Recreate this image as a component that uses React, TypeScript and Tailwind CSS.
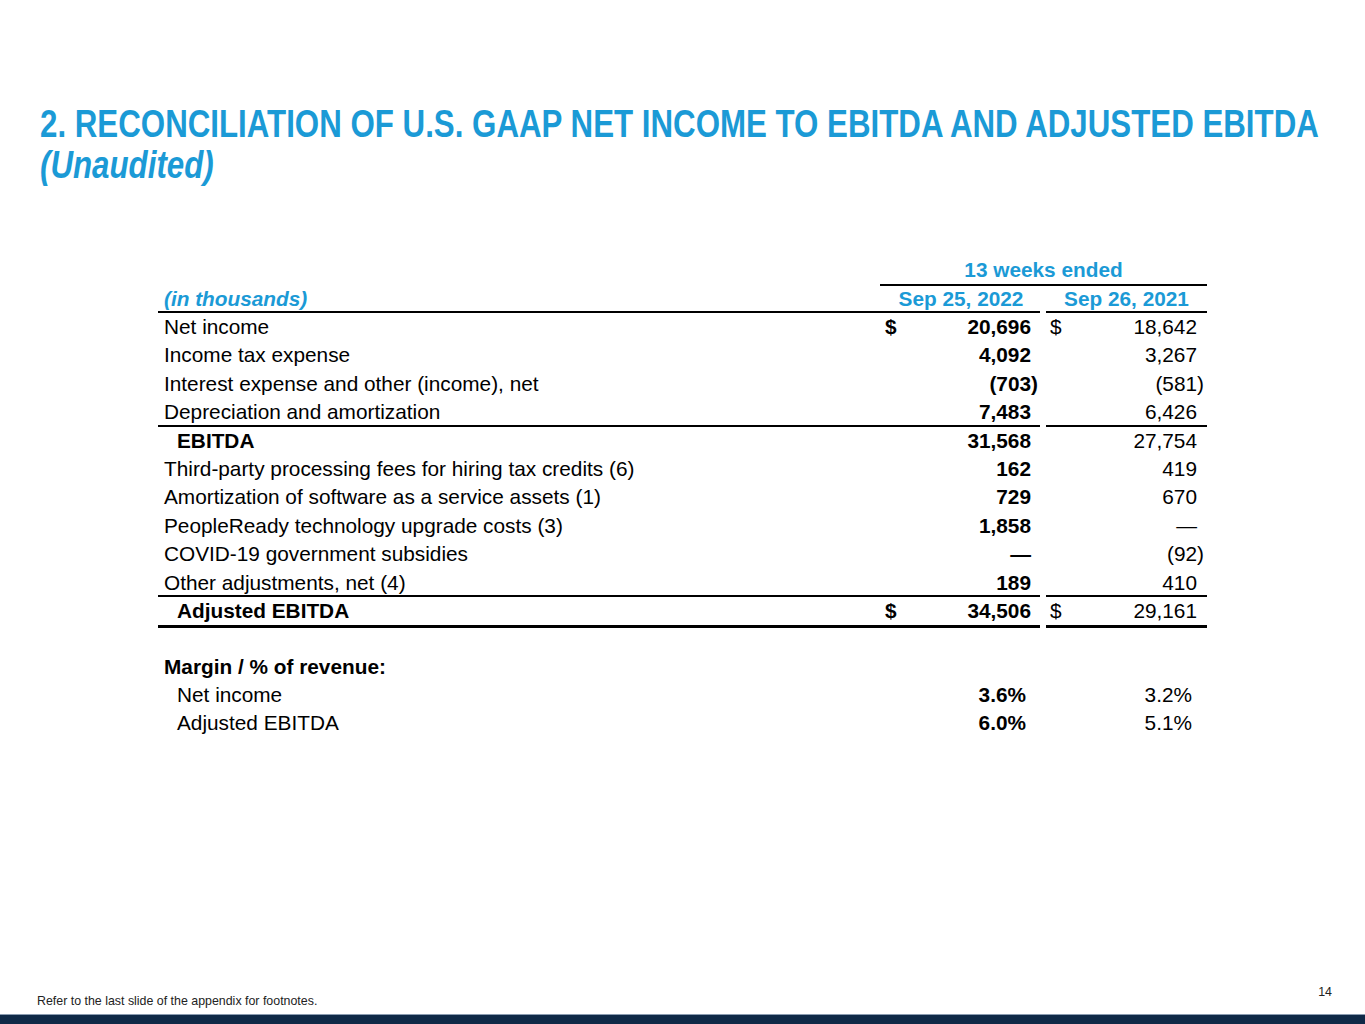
type Row = {
  label: string;
  indent?: boolean;
  bold?: boolean;
  a: string;
  b: string;
  dollar?: boolean;
  line?: 'thin' | 'thick';
};

const rows: Row[] = [
  { label: 'Net income', a: '20,696', b: '18,642', dollar: true },
  { label: 'Income tax expense', a: '4,092', b: '3,267' },
  { label: 'Interest expense and other (income), net', a: '(703)', b: '(581)' },
  { label: 'Depreciation and amortization', a: '7,483', b: '6,426', line: 'thin' },
  { label: 'EBITDA', indent: true, bold: true, a: '31,568', b: '27,754' },
  { label: 'Third-party processing fees for hiring tax credits (6)', a: '162', b: '419' },
  { label: 'Amortization of software as a service assets (1)', a: '729', b: '670' },
  { label: 'PeopleReady technology upgrade costs (3)', a: '1,858', b: '—' },
  { label: 'COVID-19 government subsidies', a: '—', b: '(92)' },
  { label: 'Other adjustments, net (4)', a: '189', b: '410', line: 'thin' },
  { label: 'Adjusted EBITDA', indent: true, bold: true, a: '34,506', b: '29,161', dollar: true, line: 'thick' },
];

// negative numbers: the closing paren hangs past the digit column
function Num({ v }: { v: string }) {
  if (v.endsWith(')')) {
    return (
      <span>
        {v.slice(0, -1)}
        <span className="-mr-[7px]">)</span>
      </span>
    );
  }
  return <span>{v}</span>;
}

function borderFor(line?: 'thin' | 'thick') {
  if (line === 'thin') return 'border-b-2 border-black';
  if (line === 'thick') return 'border-b-[3px] border-black';
  return '';
}

export default function App() {
  return (
    <div
      className="relative w-[1365px] h-[1024px] bg-white overflow-hidden flex flex-col text-black"
      style={{ fontFamily: '"Liberation Sans", Arial, sans-serif' }}
    >
      {/* Title (narrow face, squeezed from Liberation Sans) */}
      <div className="pl-[40px] pt-[104px] text-[#1b9ad6] font-bold text-[38px] leading-[41px] whitespace-nowrap">
        <div className="origin-left scale-x-[0.823]">
          2. RECONCILIATION OF U.S. GAAP NET INCOME TO EBITDA AND ADJUSTED EBITDA
        </div>
        <div className="origin-left scale-x-[0.823] italic">(Unaudited)</div>
      </div>

      {/* Table */}
      <div className="ml-[158px] mt-[70px] w-[1049px] text-[20.8px]">
        {/* period header */}
        <div className="flex h-[30px]">
          <div className="w-[722px]" />
          <div className="w-[327px] border-b-2 border-black text-center font-bold text-[#1b9ad6] leading-[28px]">
            13 weeks ended
          </div>
        </div>
        <div className="flex h-[27px] font-bold text-[#1b9ad6] leading-[25px]">
          <div className="w-[722px] pl-[6px] italic border-b-2 border-black">(in thousands)</div>
          <div className="w-[160px] text-center pl-[2px] border-b-2 border-black">Sep 25, 2022</div>
          <div className="w-[6px]" />
          <div className="w-[161px] text-center border-b-2 border-black">Sep 26, 2021</div>
        </div>

        {rows.map((r) => {
          const h = r.line === 'thick' ? 'leading-[28.4px]' : 'h-[28.4px] leading-[28px]';
          return (
            <div key={r.label} className={`flex ${h}`}>
              <div
                className={`w-[722px] ${r.indent ? 'pl-[19px]' : 'pl-[6px]'} ${r.bold ? 'font-bold' : ''} ${borderFor(r.line)}`}
              >
                {r.label}
              </div>
              <div className={`w-[160px] flex justify-between pl-[5px] pr-[9px] font-bold ${borderFor(r.line)}`}>
                <span>{r.dollar ? '$' : ''}</span>
                <Num v={r.a} />
              </div>
              <div className="w-[6px]" />
              <div className={`w-[161px] flex justify-between pl-[4px] pr-[10px] ${borderFor(r.line)}`}>
                <span>{r.dollar ? '$' : ''}</span>
                <Num v={r.b} />
              </div>
            </div>
          );
        })}

        {/* Margin */}
        <div className="mt-[25px] leading-[28px]">
          <div className="pl-[6px] font-bold">Margin / % of revenue:</div>
          <div className="flex">
            <div className="w-[722px] pl-[19px]">Net income</div>
            <div className="w-[160px] text-right pr-[14px] font-bold">3.6%</div>
            <div className="w-[6px]" />
            <div className="w-[161px] text-right pr-[15px]">3.2%</div>
          </div>
          <div className="flex">
            <div className="w-[722px] pl-[19px]">Adjusted EBITDA</div>
            <div className="w-[160px] text-right pr-[14px] font-bold">6.0%</div>
            <div className="w-[6px]" />
            <div className="w-[161px] text-right pr-[15px]">5.1%</div>
          </div>
        </div>
      </div>

      {/* Footer */}
      <div className="mt-auto flex items-end justify-between px-[33px] pb-[3px] text-[12.4px] text-[#222]">
        <div className="pl-[4px]">Refer to the last slide of the appendix for footnotes.</div>
        <div className="mb-[9px]">14</div>
      </div>
      <div className="h-[10px] bg-[#0f2947] border-t border-[#8a9bb0]" />
    </div>
  );
}
